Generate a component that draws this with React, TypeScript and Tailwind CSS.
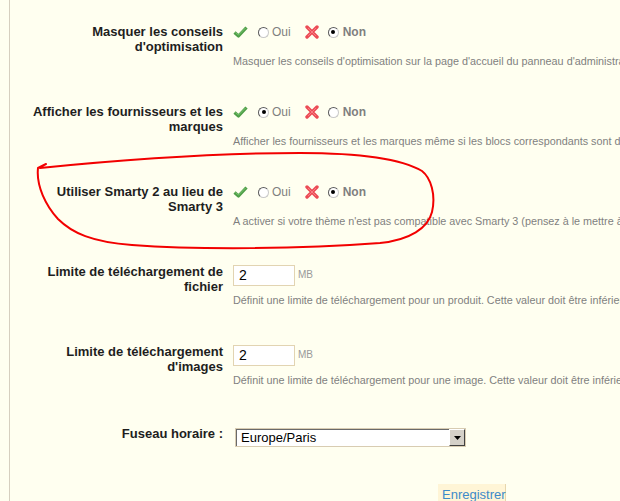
import React from 'react';

const CheckIcon = () => (
  <svg width="15" height="12" viewBox="0 0 15 12" className="shrink-0">
    <path d="M1.5 6.5 L5.5 10 L13.5 1.5" fill="none" stroke="#4f9f48" strokeWidth="3.2" strokeLinejoin="round" />
    <path d="M2.5 6.5 L5.5 9 L12.5 2" fill="none" stroke="#7cc572" strokeWidth="1" />
  </svg>
);

const CrossIcon = () => (
  <svg width="14" height="14" viewBox="0 0 14 14" className="shrink-0">
    <path d="M2 2 L12 12 M12 2 L2 12" fill="none" stroke="#ec4b55" strokeWidth="3.4" strokeLinecap="round" />
    <path d="M3 3 L11 11 M11 3 L3 11" fill="none" stroke="#f98a90" strokeWidth="0.8" />
  </svg>
);

const Radio = ({ checked }: { checked: boolean }) => (
  <span className="relative w-[11px] h-[11px] rounded-full bg-white border border-[#5a5a5a] border-r-[#c8c8c8] border-b-[#c8c8c8] shrink-0 flex items-center justify-center">
    {checked && <span className="w-[4px] h-[4px] rounded-full bg-black" />}
  </span>
);

const YesNo = ({ yes }: { yes: boolean }) => (
  <div className="flex items-center h-[16px] text-[12px] text-[#7f7f7f]">
    <CheckIcon />
    <span className="ml-[10px]"><Radio checked={yes} /></span>
    <span className="ml-[3px]">Oui</span>
    <span className="ml-[14px]"><CrossIcon /></span>
    <span className="ml-[9px]"><Radio checked={!yes} /></span>
    <span className="ml-[4px] font-bold">Non</span>
  </div>
);

const Desc = ({ children, className = '' }: { children: React.ReactNode; className?: string }) => (
  <p className={`text-[10.8px] leading-[14px] text-[#7f7f7f] whitespace-nowrap ${className}`}>{children}</p>
);

const NumberField = ({ value }: { value: string }) => (
  <div className="flex items-start mt-[1px]">
    <input
      readOnly
      value={value}
      className="w-[62px] h-[21px] bg-white border border-[#e2d4b2] px-[5px] text-[14px] text-black outline-none"
    />
    <span className="ml-[3px] mt-[2px] text-[10px] text-[#9a9a9a]">MB</span>
  </div>
);

const ROWS = [
  { label: ['Masquer les conseils', "d'optimisation"], kind: 'yesno', yes: false,
    desc: "Masquer les conseils d'optimisation sur la page d'accueil du panneau d'administration" },
  { label: ['Afficher les fournisseurs et les', 'marques'], kind: 'yesno', yes: true,
    desc: 'Afficher les fournisseurs et les marques même si les blocs correspondants sont désactivés' },
  { label: ['Utiliser Smarty 2 au lieu de', 'Smarty 3'], kind: 'yesno', yes: false,
    desc: "A activer si votre thème n'est pas compatible avec Smarty 3 (pensez à le mettre à jour)" },
  { label: ['Limite de téléchargement de', 'fichier'], kind: 'number', value: '2',
    desc: 'Définit une limite de téléchargement pour un produit. Cette valeur doit être inférieure ou égale' },
  { label: ['Limite de téléchargement', "d'images"], kind: 'number', value: '2',
    desc: 'Définit une limite de téléchargement pour une image. Cette valeur doit être inférieure ou égale' },
];

export default function App() {
  return (
    <div className="relative w-[620px] h-[501px] overflow-hidden bg-[#fffff0] pl-[9px] font-['Liberation_Sans',Arial,sans-serif]">
      <div className="h-full border-l border-[#d6cfbf] pt-[24px]">
        {ROWS.map((r, i) => (
          <div key={i} className="flex h-[80px]">
            <div className="w-[213px] shrink-0 text-right font-bold text-[13px] leading-[15px] text-[#1e1e1e]">
              {r.label[0]}
              <br />
              {r.label[1]}
            </div>
            <div className="ml-[10px] min-w-0">
              {r.kind === 'yesno' ? (
                <>
                  <YesNo yes={!!r.yes} />
                  <Desc className="mt-[14px]">{r.desc}</Desc>
                </>
              ) : (
                <>
                  <NumberField value={r.value!} />
                  <Desc className="mt-[7px]">{r.desc}</Desc>
                </>
              )}
            </div>
          </div>
        ))}

        <div className="flex h-[58px]">
          <div className="w-[213px] shrink-0 pt-[2px] text-right font-bold text-[13px] leading-[15px] text-[#1e1e1e]">
            Fuseau horaire :
          </div>
          <div className="ml-[12px] mt-[4px] flex w-[231px] h-[19px] border border-[#d8ccb2] bg-white">
            <div className="flex-1 flex items-center border-l border-t border-[#6a6a6a] pl-[4px] text-[13px] text-black">
              Europe/Paris
            </div>
            <div className="w-[16px] h-[17px] bg-[#d4d0c8] border border-white border-r-[#404040] border-b-[#404040] flex items-center justify-center">
              <svg width="7" height="4" viewBox="0 0 7 4">
                <path d="M0 0 H7 L3.5 4 Z" fill="#000" />
              </svg>
            </div>
          </div>
        </div>

        <button className="ml-[428px] w-[68px] h-[24px] bg-[#fff5d6] border-r border-[#e6d6ae] text-[13px] text-[#3d8ac9] text-left pl-[4px] pb-[3px]">
          Enregistrer
        </button>
      </div>

      <svg className="absolute inset-0 pointer-events-none" width="620" height="501" viewBox="0 0 620 501">
        <path
          d="M46 164 L38 168 C36 186 46 206 58 219 C72 233 92 242 132 245 C200 250 300 249 380 243 C410 240 428 228 432 212 C436 195 431 178 422 171 C400 158 360 153 300 153 C220 153 120 160 40 168"
          fill="none"
          stroke="#f20000"
          strokeWidth="2"
          strokeLinecap="round"
          strokeLinejoin="round"
        />
      </svg>
    </div>
  );
}
